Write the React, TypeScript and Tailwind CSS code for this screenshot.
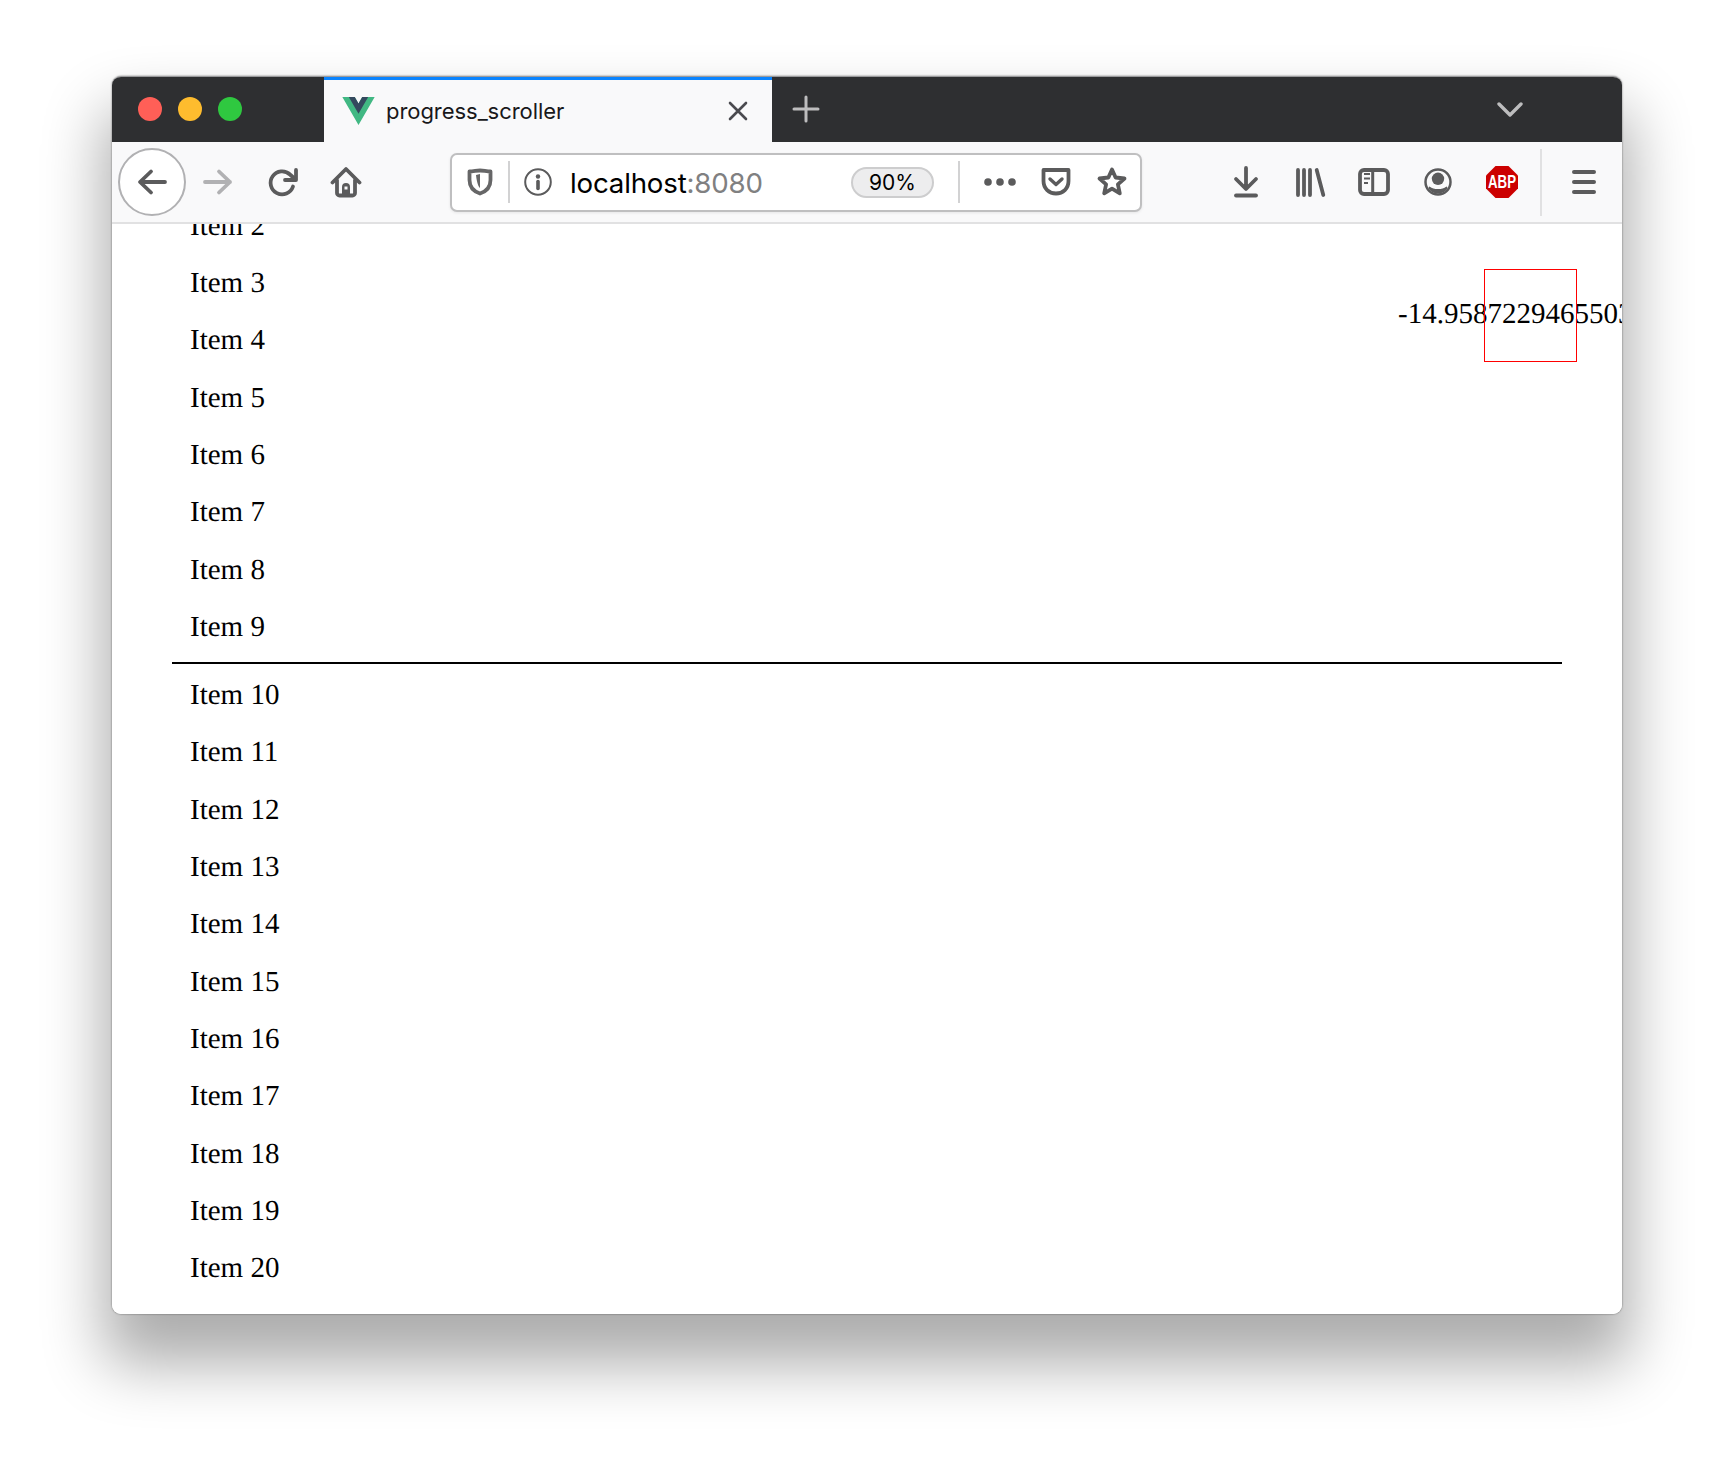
const first = [2, 3, 4, 5, 6, 7, 8, 9];
const second = [10, 11, 12, 13, 14, 15, 16, 17, 18, 19, 20];

function Row({ n }: { n: number }) {
  return <li className="h-[57.35px] pl-[78px] flex items-center text-[29px] leading-[33px] [text-rendering:geometricPrecision]">Item {n}</li>;
}

const stroke = { fill: "none", stroke: "currentColor", strokeWidth: 3.8, strokeLinecap: "round" as const, strokeLinejoin: "round" as const };

function Icon({ children, className = "" }: { children: React.ReactNode; className?: string }) {
  return (
    <svg viewBox="0 0 32 32" className={"w-8 h-8 shrink-0 text-[#5b5b5c] " + className}>
      {children}
    </svg>
  );
}

export default function App() {
  return (
    <div className="h-[1462px] bg-white pl-[112px] pt-[76px] overflow-hidden font-['Inter','Liberation_Sans',sans-serif]">
      <div className="w-[1510px] h-[1238px] rounded-[9px] overflow-hidden bg-white border-t border-[#9a9a9c] flex flex-col shadow-[0_42px_62px_8px_rgba(0,0,0,0.33),0_0_2px_rgba(0,0,0,0.55)]">
        {/* tab bar */}
        <div className="h-[65px] shrink-0 bg-[#2e2f31] flex items-stretch">
          <div className="w-[212px] flex items-center pl-[26px] gap-[16px] pb-[1px]">
            <span className="w-6 h-6 rounded-full bg-[#ff5f57]" />
            <span className="w-6 h-6 rounded-full bg-[#febc2e]" />
            <span className="w-6 h-6 rounded-full bg-[#2fc840]" />
          </div>
          <div className="w-[448px] bg-[#f9f9fa] border-t-[3px] border-[#0a84ff] flex items-center pl-[18px]">
            <svg viewBox="0 0 261.76 226.69" className="w-[33px] h-[28px] shrink-0">
              <path fill="#41b883" d="M161.096.001l-30.225 52.351L100.647.001H-.005l130.877 226.688L261.749.001z" />
              <path fill="#34495e" d="M161.096.001l-30.225 52.351L100.647.001H52.346l78.526 136.01L209.398.001z" />
            </svg>
            <span className="ml-[11px] text-[22px] leading-none text-[#18181a] tracking-[-0.05px]">progress_scroller</span>
            <svg viewBox="0 0 20 20" className="w-5 h-5 ml-auto mr-[24px] mb-[1px] text-[#4a4a4f]">
              <path d="M2 2l16 16M18 2L2 18" fill="none" stroke="currentColor" strokeWidth="2.6" strokeLinecap="round" />
            </svg>
          </div>
          <div className="ml-[20px] w-[28px] flex items-center pb-[2px]">
            <svg viewBox="0 0 28 28" className="w-7 h-7 text-[#bdbdbe]">
              <path d="M14 2v24M2 14h24" fill="none" stroke="currentColor" strokeWidth="3" strokeLinecap="round" />
            </svg>
          </div>
          <div className="ml-[677px] flex items-center">
            <svg viewBox="0 0 26 16" className="w-[26px] h-[16px] text-[#bdbdbe]">
              <path d="M2 2l11 11L24 2" fill="none" stroke="currentColor" strokeWidth="3.4" strokeLinecap="round" strokeLinejoin="round" />
            </svg>
          </div>
        </div>

        {/* toolbar */}
        <div className="h-[82px] shrink-0 bg-[#f9f9fa] border-b-2 border-[#e1e1e2] flex items-center text-[#5b5b5c]">
          <div className="ml-[6px] w-[68px] h-[68px] rounded-full bg-white border-2 border-[#b1b1b3] flex items-center justify-center">
            <Icon>
              <path {...stroke} d="M29 16H5M15 5.5L4 16l11 10.5" />
            </Icon>
          </div>
          <Icon className="ml-[16px] !text-[#b1b1b3]">
            <path {...stroke} d="M3 16h25M17 5.5L28 16 17 26.5" />
          </Icon>
          <Icon className="ml-[33px]">
            <path {...stroke} d="M26 20.5A11.5 11.5 0 1 1 23 8.5L28 13" />
            <path {...stroke} d="M29 4v10H18" />
          </Icon>
          <Icon className="ml-[31px]">
            <path {...stroke} d="M2.5 16.5L16 3l13.5 13.5M7 14v13a2.5 2.5 0 0 0 2.5 2.5h13A2.5 2.5 0 0 0 25 27V14" />
            <path fill="currentColor" fillRule="evenodd" d="M12 29v-8a4 4 0 0 1 8 0v8zM14.5 20.5v3h3v-3z" />
          </Icon>

          {/* url bar */}
          <div className="ml-[88px] w-[692px] h-[59px] rounded-[7px] bg-white border-2 border-[#bfbfc0] shadow-[0_1px_3px_rgba(0,0,0,0.08)] flex items-center">
            <Icon className="ml-[12px] !text-[#666667]">
              <path {...stroke} d="M5.5 5.5C9 5.5 13 4.5 16 4.5s7 1 10.5 1V14c0 7-4.5 11.5-10.5 13.5C10 25.5 5.5 21 5.5 14z" />
              <path fill="currentColor" d="M12 9l4-1v14c-2-1-3.5-8-4-13z" />
            </Icon>
            <div className="ml-[12px] w-[2px] h-[42px] bg-[#d2d2d3]" />
            <svg viewBox="0 0 28 28" className="ml-[14px] w-7 h-7 shrink-0 text-[#5b5b5c]">
              <circle cx="14" cy="14" r="12.8" fill="none" stroke="currentColor" strokeWidth="2" />
              <circle cx="14" cy="8.5" r="2.2" fill="currentColor" />
              <path d="M14 13.5v7" stroke="currentColor" strokeWidth="3.6" strokeLinecap="round" />
            </svg>
            <div className="ml-[18px] pt-[4px] w-[191px] whitespace-nowrap text-[27.7px] leading-none text-black tracking-[-0.2px]">
              localhost<span className="text-[#808081]">:8080</span>
            </div>
            <div className="ml-[90px] w-[83px] h-[31px] rounded-full bg-[#ededee] border-2 border-[#cdcdce] flex items-center justify-center text-[21px] leading-none text-black">
              90%
            </div>
            <div className="ml-[24px] w-[2px] h-[42px] bg-[#d2d2d3]" />
            <svg viewBox="0 0 32 8" className="ml-[24px] w-8 h-2 shrink-0 text-[#5b5b5c]">
              <circle cx="4" cy="4" r="3.8" fill="currentColor" />
              <circle cx="16" cy="4" r="3.8" fill="currentColor" />
              <circle cx="28" cy="4" r="3.8" fill="currentColor" />
            </svg>
            <Icon className="ml-[24px]">
              <path {...stroke} d="M3.5 4h25v11c0 7.5-5.5 12.5-12.5 12.5S3.5 22.5 3.5 15z" />
              <path {...stroke} strokeWidth={3.4} d="M10 13l6 5.5 6-5.5" />
            </Icon>
            <Icon className="ml-[24px]">
              <path {...stroke} d="M16 3.5l3.6 8 8.9 1-6.6 5.9 1.9 8.9L16 22.7l-7.8 4.6 1.9-8.9-6.6-5.9 8.9-1z" />
            </Icon>
          </div>

          <Icon className="ml-[88px]">
            <path {...stroke} d="M16 2v19.5M6 13l10 10 10-10" />
            <path {...stroke} d="M6 29.5h20" />
          </Icon>
          <Icon className="ml-[33px]">
            <path {...stroke} d="M3 4v25M9 4v25M15 4v25M21.7 4l6.6 25" />
          </Icon>
          <Icon className="ml-[31px]">
            <rect x="2" y="4" width="28" height="24" rx="4" {...stroke} />
            <path {...stroke} strokeWidth={3} d="M14.7 4v24" />
            <path fill="none" stroke="currentColor" strokeWidth={2.2} d="M6 8h6M6 12.5h6M6 17h4" />
          </Icon>
          <Icon className="ml-[32px]">
            <circle cx="16" cy="16" r="12.5" fill="none" stroke="currentColor" strokeWidth="2.5" />
            <circle cx="16" cy="12.8" r="6.2" fill="currentColor" />
            <path fill="currentColor" d="M7.5 20.5c2.5 2 5 2.5 8.5 2.5s6-.5 8.5-2.5c1 .5 1 1.5.5 2.5-2 3-5.5 4.5-9 4.5s-7-1.5-9-4.5c-.5-1-.5-2 .5-2.5z" />
          </Icon>
          <svg viewBox="0 0 32 32" className="ml-[32px] w-8 h-8 shrink-0">
            <path fill="#cc0000" d="M9.5 0h13L32 9.5v13L22.5 32h-13L0 22.5v-13z" />
            <text x="16" y="22.3" textAnchor="middle" fill="#fff" fontSize="18" fontWeight="700" fontFamily="'Liberation Sans', sans-serif" textLength="28" lengthAdjust="spacingAndGlyphs">ABP</text>
          </svg>
          <div className="ml-[22px] w-[2px] h-[67px] bg-[#e1e1e2]" />
          <Icon className="ml-[26px]">
            <path {...stroke} strokeWidth={4} d="M6 6h20M6 16h20M6 26h20" />
          </Icon>
        </div>

        {/* page */}
        <div className="relative flex-1 min-h-0 overflow-hidden bg-white text-black font-['Liberation_Serif',serif]">
          <ul className="-mt-[26.6px]">
            {first.map((n) => (
              <Row key={n} n={n} />
            ))}
            <li className="h-[2px] mx-[60px] mt-[5.8px] mb-[2.7px] bg-black" />
            {second.map((n) => (
              <Row key={n} n={n} />
            ))}
          </ul>
          <div className="absolute left-[1286px] top-[74px] whitespace-nowrap text-[29px] leading-[33px] [text-rendering:geometricPrecision]">-14.958722946550321</div>
          <div className="absolute left-[1372px] top-[45px] w-[93px] h-[93px] border border-[#ff0000]" />
        </div>
      </div>
    </div>
  );
}
